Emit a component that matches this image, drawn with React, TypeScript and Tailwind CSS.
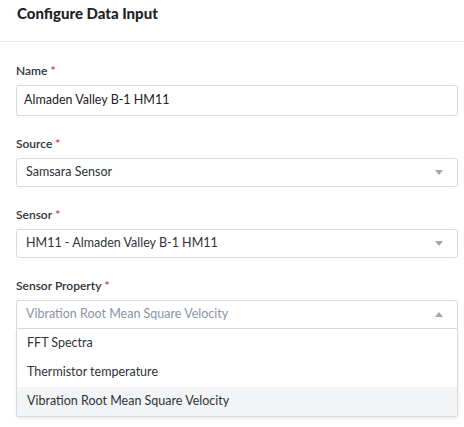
const font = { fontFamily: '"Lato", "Liberation Sans", sans-serif' };

const Caret = ({ up }: { up?: boolean }) => (
  <svg width="8" height="5" viewBox="0 0 8 5" className="shrink-0">
    {up ? <path d="M0 5 L4 0 L8 5 Z" fill="#a3a8b0" /> : <path d="M0 0 L8 0 L4 5 Z" fill="#a3a8b0" />}
  </svg>
);

const Label = ({ text }: { text: string }) => (
  <div className="mb-[6px] text-[12px] font-semibold text-[#2f3338] leading-[16px]">
    {text}
    <span className="ml-[3px] text-[#c4314b]">*</span>
  </div>
);

const Select = ({ value }: { value: string }) => (
  <div className="flex h-[29px] items-center justify-between rounded-[3px] border border-[#d6d9de] bg-white pl-[9px] pr-[14px] text-[12.5px] text-[#2f3338]">
    <span>{value}</span>
    <Caret />
  </div>
);

const options = ['FFT Spectra', 'Thermistor temperature', 'Vibration Root Mean Square Velocity'];

export default function App() {
  return (
    <div className="h-[427px] w-[464px] overflow-hidden bg-white" style={font}>
      <div className="border-b border-[#e6e8eb] px-[17px] pt-[2px] pb-[17px]">
        <h1 className="text-[15px] font-black text-[#1f2328] leading-[22px]">Configure Data Input</h1>
      </div>
      <div className="pl-[16px] pr-[6px] pt-[21px]">
        <Label text="Name" />
        <div className="flex h-[31px] items-center rounded-[3px] border border-[#d6d9de] bg-white px-[7px] text-[12.5px] text-[#1f2328]">
          Almaden Valley B-1 HM11
        </div>

        <div className="mt-[20px]">
          <Label text="Source" />
          <Select value="Samsara Sensor" />
        </div>

        <div className="mt-[20px]">
          <Label text="Sensor" />
          <Select value="HM11 - Almaden Valley B-1 HM11" />
        </div>

        <div className="mt-[20px]">
          <Label text="Sensor Property" />
          <div className="flex h-[29px] items-center justify-between rounded-t-[3px] border border-[#d6d9de] bg-white pl-[9px] pr-[14px] text-[12.5px] text-[#8b94a3]">
            <span>Vibration Root Mean Square Velocity</span>
            <Caret up />
          </div>
          <div className="rounded-b-[3px] border border-t-0 border-[#d6d9de] bg-white shadow-[0_2px_4px_rgba(0,0,0,0.08)]">
            {options.map((o, i) => (
              <div
                key={o}
                className={`flex h-[29px] items-center px-[10px] text-[12.5px] text-[#2f3338] ${i === 2 ? 'bg-[#f3f4f6]' : ''}`}
              >
                {o}
              </div>
            ))}
          </div>
        </div>
      </div>
    </div>
  );
}
